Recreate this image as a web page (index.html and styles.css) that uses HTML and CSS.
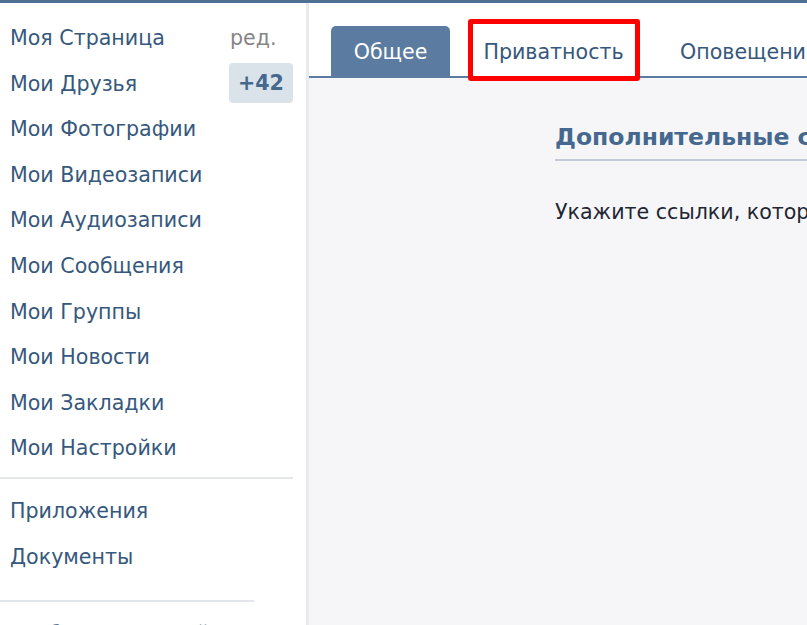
FILE: index.html
```html
<!DOCTYPE html>
<html lang="ru">
<head>
<meta charset="utf-8">
<title>Настройки</title>
<link rel="stylesheet" href="styles.css">
</head>
<body>
<div class="topbar"></div>
<div class="layout">
  <aside class="sidebar">
    <ul class="menu">
      <li class="item"><a class="link">Моя Страница</a><span class="side edit">ред.</span></li>
      <li class="item"><a class="link">Мои Друзья</a><span class="side badge">+42</span></li>
      <li class="item"><a class="link">Мои Фотографии</a></li>
      <li class="item"><a class="link">Мои Видеозаписи</a></li>
      <li class="item"><a class="link">Мои Аудиозаписи</a></li>
      <li class="item"><a class="link">Мои Сообщения</a></li>
      <li class="item"><a class="link">Мои Группы</a></li>
      <li class="item"><a class="link">Мои Новости</a></li>
      <li class="item"><a class="link">Мои Закладки</a></li>
      <li class="item"><a class="link">Мои Настройки</a></li>
    </ul>
    <div class="sep sep-wide"></div>
    <ul class="menu menu-extra">
      <li class="item"><a class="link">Приложения</a></li>
      <li class="item"><a class="link">Документы</a></li>
    </ul>
    <div class="sep sep-narrow"></div>
    <ul class="menu menu-more">
      <li class="item"><a class="link more">Обновить Дизайн</a></li>
    </ul>
  </aside>
  <main class="main">
    <nav class="tabs">
      <a class="tab tab-active">Общее</a>
      <a class="tab tab-marked">Приватность<span class="mark"></span></a>
      <a class="tab tab-next">Оповещения</a>
    </nav>
    <section class="content">
      <h2 class="heading">Дополнительные сервисы</h2>
      <p class="text">Укажите ссылки, которые вы хотите видеть в меню</p>
    </section>
  </main>
</div>
</body>
</html>
```

FILE: styles.css
```css
* { box-sizing: border-box; }
html, body { margin: 0; padding: 0; }
body {
  width: 807px;
  height: 625px;
  overflow: hidden;
  background: #ffffff;
  font-family: "DejaVu Sans", sans-serif;
  font-size: 20.6px;
  color: #222;
}
.topbar {
  height: 3px;
  background: #4f6f95;
}
.layout {
  display: flex;
  height: 622px;
}
.sidebar {
  width: 309px;
  flex: none;
  border-right: 3px solid #e8eaee;
  padding: 13px 0 0 0;
  overflow: hidden;
}
.menu {
  list-style: none;
  margin: 0;
  padding: 0 12px 0 10px;
  width: 305px;
}
.item {
  display: flex;
  justify-content: space-between;
  align-items: flex-start;
  height: 45.6px;
  line-height: 45.6px;
}
.link {
  color: #36587d;
  white-space: nowrap;
}
.side {
  width: 64px;
  flex: none;
}
.edit {
  color: #858585;
  padding-left: 1px;
}
.badge {
  margin-top: 1px;
  height: 40px;
  line-height: 40px;
  background: #dae2ea;
  border-radius: 4px;
  text-align: center;
  font-weight: bold;
  color: #45688e;
}
.sep {
  height: 2px;
  background: #e3e6ea;
  margin: 5px 0 10px 0;
}
.sep-wide { width: 293px; }
.sep-narrow { width: 254px; margin-top: 20px; }
.menu-more .link { padding-left: 22px; }

.main {
  flex: 1;
  background: #f6f6f8;
  overflow: hidden;
}
.tabs {
  display: flex;
  align-items: flex-end;
  height: 75px;
  padding-left: 22px;
  background: #ffffff;
  border-bottom: 2px solid #5b7ba0;
  white-space: nowrap;
}
.tab {
  position: relative;
  display: block;
  flex: none;
  height: 50px;
  line-height: 53px;
  text-align: center;
  color: #36587d;
  border-radius: 5px 5px 0 0;
}
.tab-active {
  width: 119px;
  margin-right: 12px;
  background: #5b7ba0;
  color: #ffffff;
}
.tab-marked {
  width: 183px;
  margin-right: 14px;
}
.tab-next {
  padding: 0 21px;
}
.mark {
  position: absolute;
  left: 6px;
  right: 5px;
  top: -7px;
  bottom: -5px;
  border: 5px solid #ff0000;
  border-radius: 3px;
}
.content {
  padding: 44px 0 0 246px;
}
.heading {
  margin: 0;
  font-size: 23.5px;
  font-weight: bold;
  color: #45688e;
  white-space: nowrap;
  line-height: 30px;
  padding-bottom: 7px;
  border-bottom: 2px solid #c3cbd6;
}
.text {
  margin: 36px 0 0 0;
  white-space: nowrap;
  line-height: 30px;
  color: #1e2633;
}
```
